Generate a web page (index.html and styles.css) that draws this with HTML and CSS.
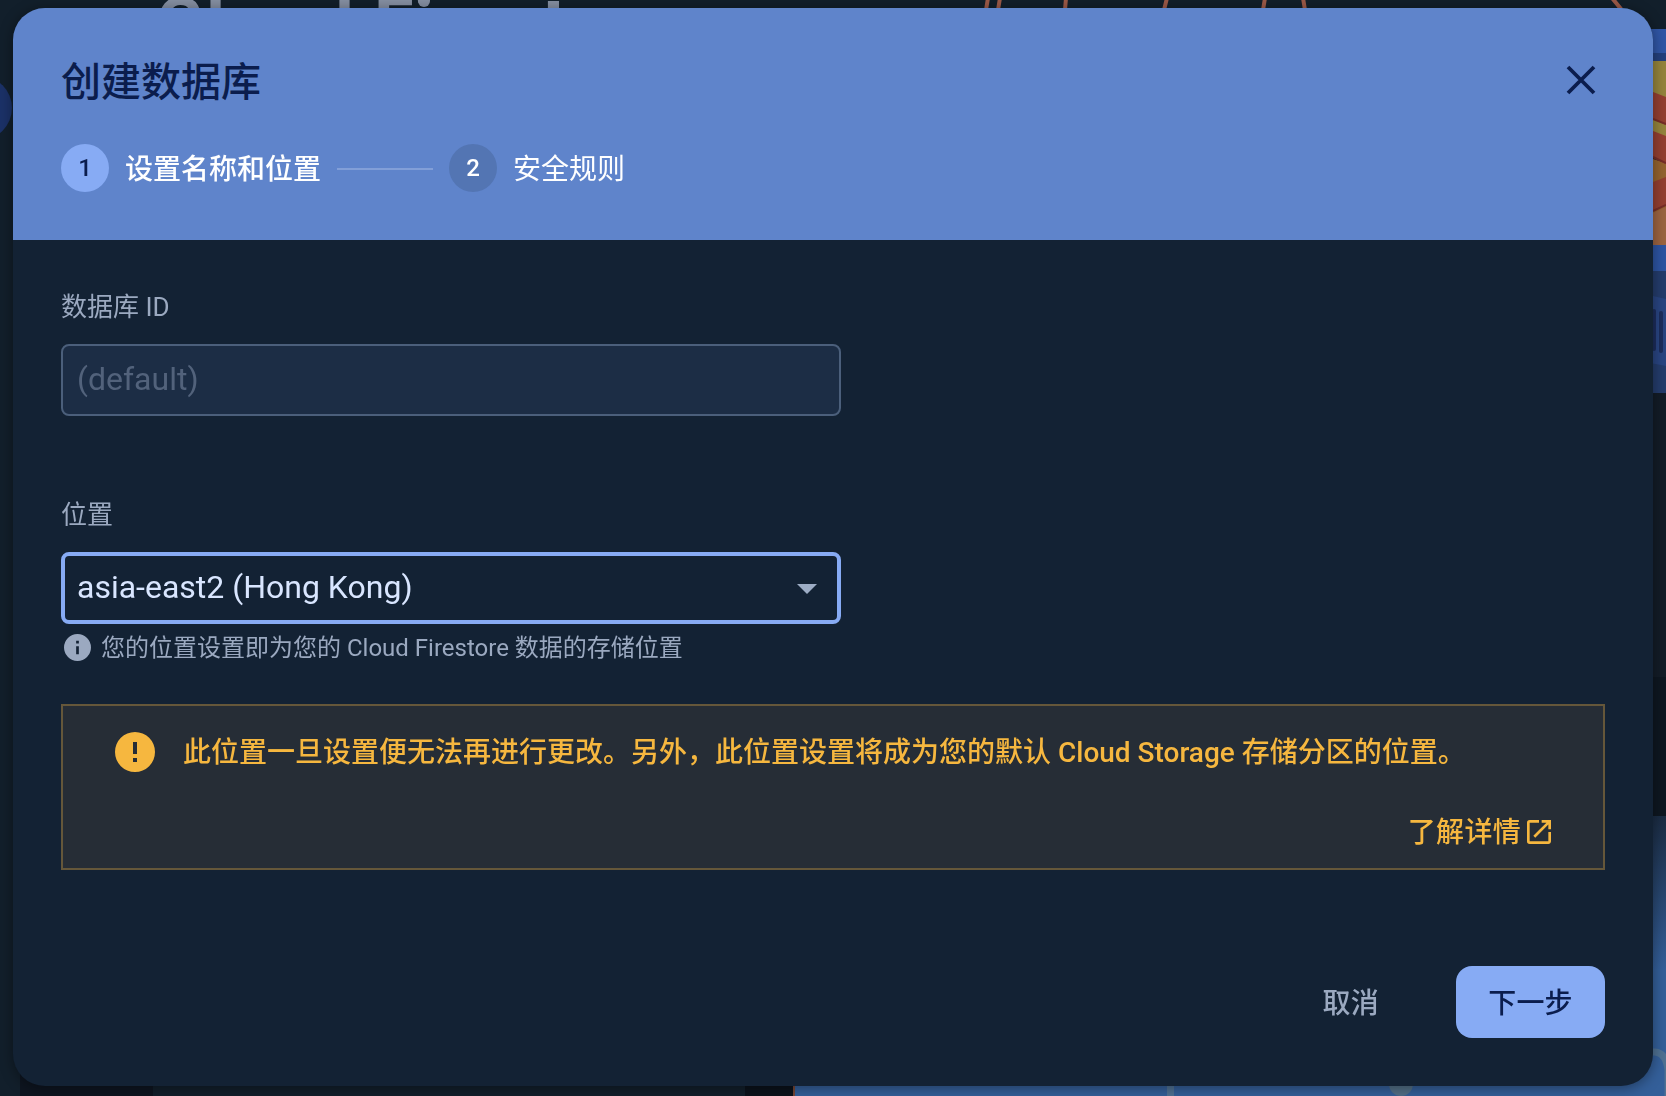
FILE: index.html
```html
<!DOCTYPE html>
<html lang="zh-CN">
<head>
<meta charset="utf-8">
<title>创建数据库</title>
<link rel="stylesheet" href="styles.css">
</head>
<body>
<svg class="backdrop" viewBox="0 0 1666 1096" aria-hidden="true">
  <defs>
    <linearGradient id="promo" x1="0" y1="816" x2="0" y2="970" gradientUnits="userSpaceOnUse">
      <stop offset="0" stop-color="#1b2c43"/>
      <stop offset="1" stop-color="#345f99"/>
    </linearGradient>
  </defs>
  <rect width="1666" height="1096" fill="#121f2b"/>
  <text class="product-name" y="49" x="156 206 226 273 313 360 374 414 437 466 507 542">Cloud Firest</text>
  <circle cx="424" cy="1" r="6" fill="#858fa2"/>
  <path fill="#858fa2" d="M549 1h10v10h-10z"/>
  <circle cx="-20" cy="108" r="32" fill="#1b3167"/>
  <g stroke="#9c5948" stroke-width="4">
    <path d="M988 -2l-2 12M1000 -2l-2 12M1066 -2l-1 12M1167 -2l-3 12M1265 -2l-2 12M1303 -2l2 12M1612 -2l14 17"/>
  </g>
  <g>
    <path fill="#3056a6" d="M1640 29h26v24h-26z"/>
    <path fill="#24407d" d="M1640 53h26v8h-26z"/>
    <path fill="#95843c" d="M1640 61h26v85h-26z"/>
    <path fill="#94632f" d="M1640 155l26 8v82h-26z"/>
    <path fill="#943f30" d="M1653 92l13 5v28l-13-6zM1653 131l13 5v28l-13-6zM1653 182l13-5v28l-13 6z"/>
    <path stroke="#762d27" stroke-width="2" fill="none" d="M1653 119l13 5M1653 157l13 6M1653 211l13-6"/>
    <path fill="#9c6440" d="M1653 213l13-6v38h-13z"/>
    <path fill="#2d54a2" d="M1640 245h26v26h-26z"/>
    <path fill="#243c6c" d="M1640 271h26v122h-26z"/>
    <path fill="#294582" d="M1640 293l26 6v67l-26-5z"/>
    <path stroke="#1c2d5c" stroke-width="4" stroke-linecap="round" d="M1654 311v38M1661 313v38"/>
  </g>
  <path fill="#131c27" d="M1640 393h26v284h-26z"/>
  <path fill="#0e1721" d="M1640 677h26v139h-26z"/>
  <path fill="#0e1520" d="M20 1040h133v56H20z"/>
  <path fill="#0b121b" d="M745 1040h48v56h-48z"/>
  <path fill="url(#promo)" d="M794 816h872v280H794z"/>
  <path fill="#744534" d="M793 1040h2v56h-2z"/>
  <path stroke="#4f7193" stroke-width="7" fill="none" d="M1170.500 1080v20M1640 1052h15q11 1 13 18v30"/>
  <circle cx="1401" cy="1084" r="12" fill="#526f86"/>
</svg>

<main class="dialog" role="dialog" aria-labelledby="title">
  <header class="header">
    <div class="title-row">
      <h1 class="title" id="title">创建数据库</h1>
      <button class="close" aria-label="关闭">
        <svg viewBox="0 0 48 48" width="48" height="48"><path d="M11 11l26 26M37 11L11 37" stroke="#0b1d4d" stroke-width="3.800"/></svg>
      </button>
    </div>
    <ol class="stepper">
      <li class="step step-active"><span class="number">1</span><span class="step-name">设置名称和位置</span></li>
      <li class="connector"></li>
      <li class="step"><span class="number">2</span><span class="step-name">安全规则</span></li>
    </ol>
  </header>
  <section class="content">
    <label class="label" for="db">数据库 ID</label>
    <input class="field" id="db" placeholder="(default)">
    <div class="label label-location">位置</div>
    <div class="field select" role="combobox" tabindex="0">
      <span>asia-east2 (Hong Kong)</span>
      <svg class="arrow" viewBox="0 0 20 10" width="20" height="10"><path d="M0 0h20L10 10z" fill="#9dadc5"/></svg>
    </div>
    <div class="hint">
      <svg viewBox="2 2 20 20" width="27" height="27"><path fill="#9ba9c0" fill-rule="evenodd" d="M12 2a10 10 0 1 0 0 20 10 10 0 0 0 0-20zm1 15h-2v-6h2v6zm0-8h-2V7h2v2z"/></svg>
      <span class="hint-text">您的位置设置即为您的 Cloud Firestore 数据的存储位置</span>
    </div>
    <div class="warning">
      <div class="message">
        <svg viewBox="2 2 20 20" width="40" height="40"><path fill="#f6b73f" fill-rule="evenodd" d="M12 2a10 10 0 1 0 0 20 10 10 0 0 0 0-20zm1 15h-2v-2h2v2zm0-4h-2V7h2v6z"/></svg>
        <span class="message-text">此位置一旦设置便无法再进行更改。另外，此位置设置将成为您的默认 Cloud Storage 存储分区的位置。</span>
      </div>
      <a class="link"><span class="link-text">了解详情</span><svg viewBox="3 3 18 18" width="24" height="24"><path fill="#f6b73f" d="M19 19H5V5h7V3H5a2 2 0 0 0-2 2v14a2 2 0 0 0 2 2h14c1.100 0 2-.9 2-2v-7h-2v7zM14 3v2h3.590l-9.830 9.830 1.410 1.410L19 6.410V10h2V3h-7z"/></svg></a>
    </div>
  </section>
  <footer class="actions">
    <button class="button">取消</button>
    <button class="button primary">下一步</button>
  </footer>
</main>
</body>
</html>
```
FILE: styles.css
```css
* { box-sizing: border-box; }

body {
  margin: 0;
  height: 1096px;
  padding: 8px 13px 10px;
  overflow: hidden;
  background: #121f2b;
  font-family: Roboto, "Noto Sans CJK SC", sans-serif;
}

svg { display: block; flex: none; }
button { border: 0; background: none; padding: 0; font: inherit; }

.backdrop { position: fixed; top: 0; left: 0; width: 1666px; height: 1096px; }
.product-name {
  font-family: Roboto, sans-serif;
  font-size: 72px;
  font-weight: 700;
  font-variant-ligatures: none;
  fill: #858fa2;
}

.dialog {
  position: relative;
  display: flex;
  flex-direction: column;
  width: 1640px;
  height: 1078px;
  border-radius: 32px;
  overflow: hidden;
  background: #132234;
  box-shadow: 0 2px 14px rgba(0, 0, 0, .4);
}

.header { height: 232px; padding: 48px 48px 0; background: #5f84cb; }
.title-row { display: flex; justify-content: space-between; height: 48px; }
.title { margin: 0; padding-top: 3px; font-size: 40px; line-height: 48px; font-weight: 500; color: #0b1d4d; }
.close { width: 48px; height: 48px; }

.stepper { display: flex; align-items: center; gap: 16px; margin: 40px 0 0; padding: 0; list-style: none; }
.step { display: flex; align-items: center; gap: 16px; height: 48px; font-size: 28px; line-height: 48px; color: #fff; }
.step-active { font-weight: 500; }
.step-name { padding-top: 3px; }
.number {
  width: 48px;
  height: 48px;
  border-radius: 50%;
  background: #5375b3;
  font-size: 24px;
  font-weight: 500;
  text-align: center;
}
.step-active .number { background: #87abf4; color: #0b1d4d; }
.connector { width: 96px; height: 2px; margin-top: 2px; background: #829fd8; }

.content { padding: 48px 48px 0; }
.label { display: block; height: 40px; line-height: 39px; font-size: 26px; color: #9ba9c0; }
.label-location { margin-top: 80px; }
.field {
  display: block;
  width: 780px;
  height: 72px;
  margin-top: 16px;
  padding: 0 14px 2px;
  border: 2px solid #4b5f7b;
  border-radius: 8px;
  background: #1c2d45;
  font: 32px Roboto, sans-serif;
}
.field::placeholder { color: #52627b; opacity: 1; }
.select {
  display: flex;
  align-items: center;
  justify-content: space-between;
  padding: 0 20px 2px 12px;
  border: 4px solid #87abf4;
  background: transparent;
  color: #d9e6ff;
}
.arrow { margin-top: 4px; }
.hint { display: flex; align-items: center; gap: 10px; height: 48px; padding: 0 0 1px 3px; font-size: 24px; color: #9ba9c0; }
.hint-text { padding-bottom: 4px; }

.warning {
  display: flex;
  flex-direction: column;
  justify-content: space-between;
  height: 166px;
  margin-top: 32px;
  padding: 26px 52px 16px;
  border: 2px solid #65573a;
  background: #262d36;
  color: #f6b73f;
  font-size: 28px;
  font-weight: 500;
  line-height: 40px;
}
.message { display: flex; gap: 28px; height: 40px; white-space: nowrap; }
.message-text { padding-top: 1px; }
.link { display: flex; align-items: center; justify-content: flex-end; gap: 6px; height: 40px; }
.link-text { padding-top: 2px; letter-spacing: .3px; }

.actions { display: flex; justify-content: flex-end; gap: 45px; margin-top: auto; padding: 0 48px 48px; }
.button { height: 72px; padding: 0 32px 2px; border-radius: 16px; font-size: 28px; font-weight: 500; color: #9ba9c0; letter-spacing: .2px; }
.primary { width: 149px; background: #87abf4; color: #0b1d4d; }
```
